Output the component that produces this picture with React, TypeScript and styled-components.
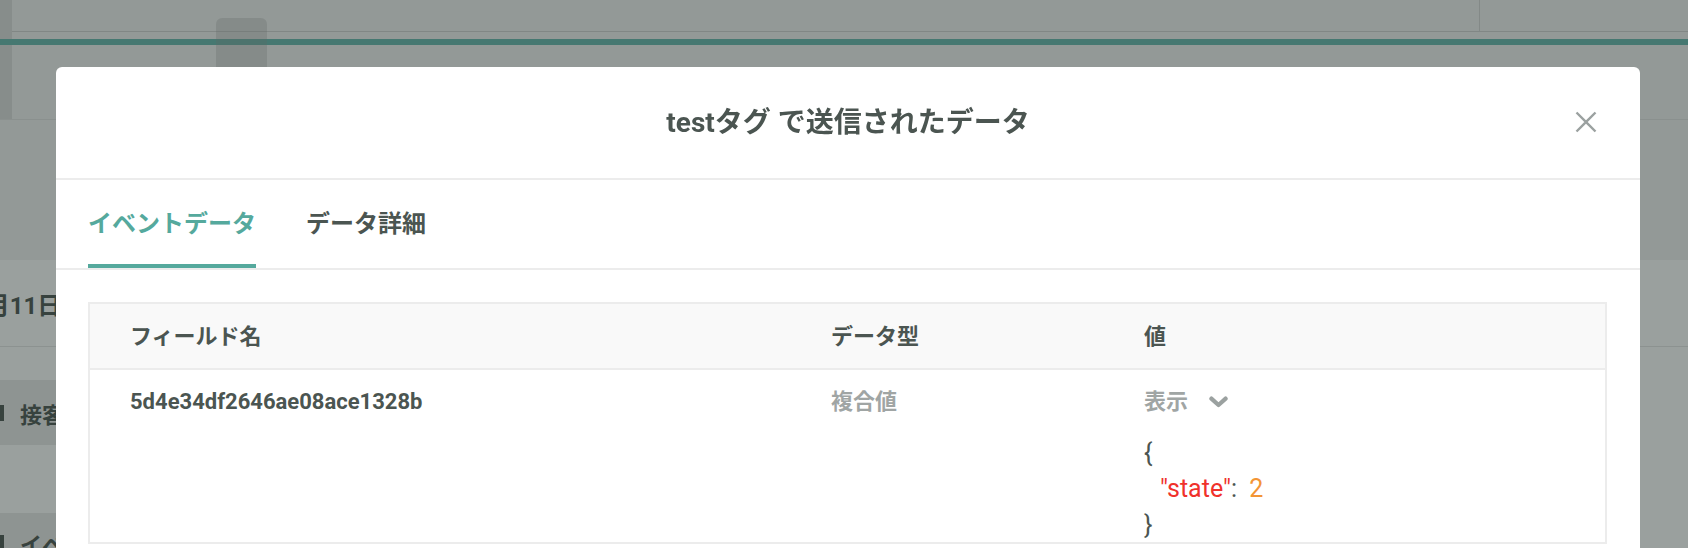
import styled, { createGlobalStyle } from "styled-components";

const GlobalStyle = createGlobalStyle`
    html, body {
        margin: 0;
        padding: 0;
        width: 1688px;
        height: 548px;
        overflow: hidden;
        background: #ffffff;
        font-family: Roboto, "Noto Sans CJK JP", sans-serif;
    }
    * {
        box-sizing: border-box;
    }
`

const fields = [
    {
        name: '5d4e34df2646ae08ace1328b',
        type: '複合値',
        key: 'state',
        value: '2',
    },
]

const Close = () => (
    <svg width="22" height="22" viewBox="0 0 22 22">
        <path d="M1.5 1.5 L20.5 20.5 M20.5 1.5 L1.5 20.5" stroke="#9ba1a0" strokeWidth="2.4" fill="none" />
    </svg>
)

const Chevron = () => (
    <svg width="19" height="12" viewBox="0 0 19 12">
        <path d="M2.4 2.6 L9.5 9 L16.6 2.6" stroke="#9ba1a0" strokeWidth="4.2" fill="none" strokeLinecap="round" strokeLinejoin="round" />
    </svg>
)

export default function App() {
    return (
        <>
            <GlobalStyle />
            <Page>
                <Header>
                    <SideStrip />
                    <HeaderMain>
                        <TopRow>
                            <TopLeft />
                            <TopRight />
                        </TopRow>
                        <TealBar />
                    </HeaderMain>
                    <Handle />
                </Header>
                <Spacer />
                <DateRow>
                    <DateText>8月11日</DateText>
                </DateRow>
                <Blank height={33} />
                <Section height={65}>
                    <SectionBox />
                    <SectionTitle>接客</SectionTitle>
                </Section>
                <Blank height={68} />
                <Section height={60}>
                    <SectionBox />
                    <SectionTitle>イベント</SectionTitle>
                </Section>
            </Page>

            <Backdrop>
                <Modal>
                    <ModalHeader>
                        <ModalTitle>testタグ で送信されたデータ</ModalTitle>
                        <CloseButton><Close /></CloseButton>
                    </ModalHeader>
                    <Tabs>
                        <Tab active>イベントデータ</Tab>
                        <Tab>データ詳細</Tab>
                    </Tabs>
                    <ModalBody>
                        <Table>
                            <HeadRow>
                                <HeadCell>フィールド名</HeadCell>
                                <HeadCell>データ型</HeadCell>
                                <HeadCell>値</HeadCell>
                            </HeadRow>
                            {fields.map((item) => (
                                <Row key={item.name}>
                                    <NameCell>{item.name}</NameCell>
                                    <TypeCell>{item.type}</TypeCell>
                                    <ValueCell>
                                        <Toggle>
                                            表示
                                            <Chevron />
                                        </Toggle>
                                        <Json>
                                            <JsonLine>{'{'}</JsonLine>
                                            <JsonLine indent>
                                                <JsonKey>"{item.key}"</JsonKey>: <JsonNum>{item.value}</JsonNum>
                                            </JsonLine>
                                            <JsonLine>{'}'}</JsonLine>
                                        </Json>
                                    </ValueCell>
                                </Row>
                            ))}
                        </Table>
                    </ModalBody>
                </Modal>
            </Backdrop>
        </>
    )
}

const Page = styled.div`
    width: 1688px;
    height: 548px;
    display: flex;
    flex-direction: column;
    background: #ffffff;
`

const Header = styled.div`
    height: 120px;
    flex-shrink: 0;
    display: flex;
    position: relative;
    background: #f3f3f3;
    border-bottom: 1px solid #e2e2e2;
`

const SideStrip = styled.div`
    width: 12px;
    background: #dcdcdc;
`

const HeaderMain = styled.div`
    flex: 1;
    display: flex;
    flex-direction: column;
`

const TopRow = styled.div`
    height: 32px;
    display: flex;
    border-bottom: 1px solid #d2d2d2;
    margin-bottom: 7px;
`

const TopLeft = styled.div`
    width: 1467px;
`

const TopRight = styled.div`
    flex: 1;
    border-left: 1px solid #d6d6d6;
`

const TealBar = styled.div`
    height: 6px;
    margin-left: -12px;
    background: #67b6ae;
`

const Handle = styled.div`
    position: absolute;
    left: 216px;
    top: 18px;
    width: 51px;
    height: 102px;
    border-radius: 6px 6px 0 0;
    background: rgba(150, 150, 150, 0.28);
`

const Spacer = styled.div`
    height: 140px;
    flex-shrink: 0;
    background: #f3f3f3;
`

const DateRow = styled.div`
    height: 87px;
    flex-shrink: 0;
    display: flex;
    align-items: center;
    border-bottom: 1px solid #e6e6e6;
`

const DateText = styled.span`
    margin-left: -28px;
    font-size: 24px;
    font-weight: 700;
    color: #4b5551;
`

const Blank = styled.div<{ height: number }>`
    height: ${(p) => p.height}px;
    flex-shrink: 0;
`

const Section = styled.div<{ height: number }>`
    height: ${(p) => p.height}px;
    flex-shrink: 0;
    width: 600px;
    display: flex;
    align-items: center;
    gap: 16px;
    background: #e9e9e9;
`

const SectionBox = styled.span`
    width: 12px;
    height: 16px;
    margin-left: -8px;
    background: #4b5551;
`

const SectionTitle = styled.span`
    font-size: 22px;
    font-weight: 700;
    color: #4b5551;
`

const Backdrop = styled.div`
    position: fixed;
    inset: 0;
    background: rgba(30, 45, 40, 0.45);
    padding: 67px 48px 0 56px;
`

const Modal = styled.div`
    width: 1584px;
    height: 600px;
    background: #ffffff;
    border-radius: 6px 6px 0 0;
    display: flex;
    flex-direction: column;
`

const ModalHeader = styled.div`
    height: 113px;
    flex-shrink: 0;
    display: flex;
    align-items: center;
    justify-content: center;
    position: relative;
    border-bottom: 2px solid #ececec;
`

const ModalTitle = styled.h2`
    margin: 0 0 6px;
    font-size: 28px;
    font-weight: 700;
    color: #4b5551;
`

const CloseButton = styled.button`
    position: absolute;
    right: 43px;
    top: 44px;
    width: 22px;
    height: 22px;
    padding: 0;
    border: none;
    background: none;
    display: flex;
`

const Tabs = styled.div`
    height: 90px;
    flex-shrink: 0;
    display: flex;
    gap: 50px;
    padding: 0 32px;
    border-bottom: 2px solid #ececec;
`

const Tab = styled.div<{ active?: boolean }>`
    display: flex;
    align-items: center;
    padding-bottom: 2px;
    font-size: 24px;
    font-weight: 700;
    color: ${(p) => (p.active ? '#55a99d' : '#4b5551')};
    border-bottom: 4px solid ${(p) => (p.active ? '#55a99d' : 'transparent')};
`

const ModalBody = styled.div`
    padding: 32px 33px 0 32px;
`

const Table = styled.div`
    border: 2px solid #ececec;
    border-bottom: none;
`

const HeadRow = styled.div`
    height: 66px;
    padding-bottom: 5px;
    display: grid;
    grid-template-columns: 701px 313px 1fr;
    align-items: center;
    background: #f9f9f9;
    border-bottom: 2px solid #ececec;
`

const HeadCell = styled.div`
    padding-left: 40px;
    font-size: 22px;
    font-weight: 700;
    color: #4b5551;
`

const Row = styled.div`
    height: 174px;
    display: grid;
    grid-template-columns: 701px 313px 1fr;
    align-items: start;
    border-bottom: 2px solid #ececec;
`

const NameCell = styled.div`
    padding: 17px 0 0 40px;
    font-size: 22px;
    line-height: 30px;
    font-weight: 700;
    color: #4b5551;
`

const TypeCell = styled(NameCell)`
    color: #a0a5a4;
`

const ValueCell = styled.div`
    padding: 17px 0 0 40px;
    display: flex;
    flex-direction: column;
`

const Toggle = styled.div`
    display: flex;
    align-items: center;
    gap: 21px;
    font-size: 22px;
    line-height: 30px;
    font-weight: 700;
    color: #a0a5a4;
`

const Json = styled.div`
    margin-top: 18px;
    font-size: 25px;
    line-height: 36px;
    color: #4b5551;
`

const JsonLine = styled.div<{ indent?: boolean }>`
    padding-left: ${(p) => (p.indent ? '16px' : '0')};
`

const JsonKey = styled.span`
    color: #f0312b;
`

const JsonNum = styled.span`
    margin-left: 6px;
    color: #f39435;
`
